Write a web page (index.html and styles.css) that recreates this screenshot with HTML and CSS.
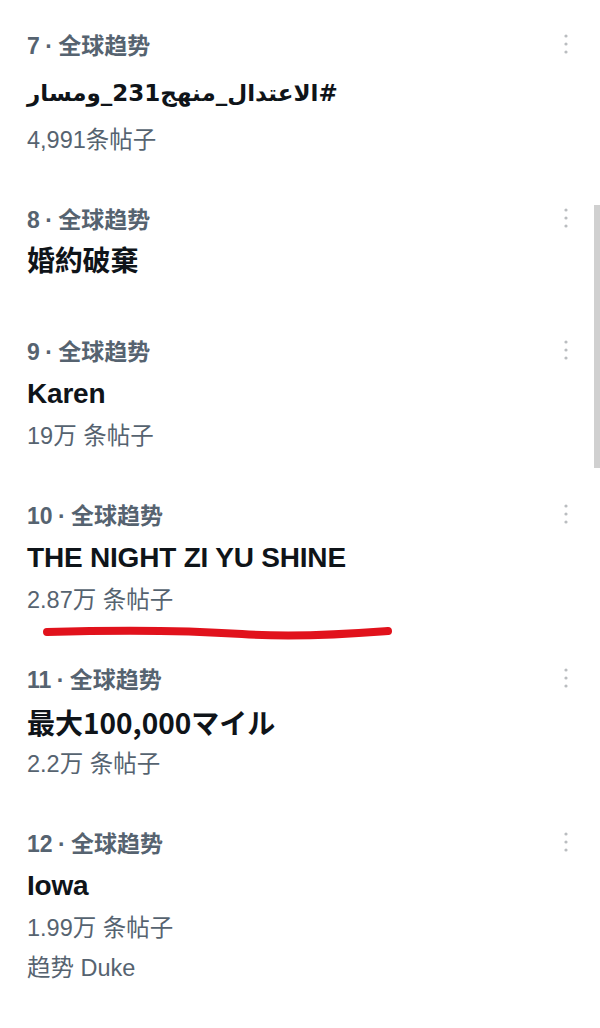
FILE: index.html
```html
<!DOCTYPE html>
<html lang="zh">
<head>
<meta charset="utf-8">
<title>趋势</title>
<link rel="stylesheet" href="styles.css">
</head>
<body>
<main class="trends">
  <section class="trend trend--tall">
    <div class="trend-body">
      <div class="meta">7 · 全球趋势</div>
      <div class="name name--ar"><span dir="rtl">#الاعتدال_منهج231_ومسار</span></div>
      <div class="count">4,991条帖子</div>
    </div>
    <div class="more"><svg viewBox="0 0 20 20" width="20" height="20"><circle cx="10" cy="2" r="1.6"/><circle cx="10" cy="10" r="1.6"/><circle cx="10" cy="18" r="1.6"/></svg></div>
  </section>

  <section class="trend trend--short">
    <div class="trend-body">
      <div class="meta">8 · 全球趋势</div>
      <div class="name">婚約破棄</div>
    </div>
    <div class="more"><svg viewBox="0 0 20 20" width="20" height="20"><circle cx="10" cy="2" r="1.6"/><circle cx="10" cy="10" r="1.6"/><circle cx="10" cy="18" r="1.6"/></svg></div>
  </section>

  <section class="trend">
    <div class="trend-body">
      <div class="meta">9 · 全球趋势</div>
      <div class="name">Karen</div>
      <div class="count">19万 条帖子</div>
    </div>
    <div class="more"><svg viewBox="0 0 20 20" width="20" height="20"><circle cx="10" cy="2" r="1.6"/><circle cx="10" cy="10" r="1.6"/><circle cx="10" cy="18" r="1.6"/></svg></div>
  </section>

  <section class="trend trend--marked">
    <div class="trend-body">
      <div class="meta">10 · 全球趋势</div>
      <div class="name">THE NIGHT ZI YU SHINE</div>
      <div class="count">2.87万 条帖子</div>
    </div>
    <div class="more"><svg viewBox="0 0 20 20" width="20" height="20"><circle cx="10" cy="2" r="1.6"/><circle cx="10" cy="10" r="1.6"/><circle cx="10" cy="18" r="1.6"/></svg></div>
    <svg class="underline" viewBox="0 0 352 16" width="352" height="16"><path d="M5 7 C 70 5, 140 5, 200 9 S 320 8, 346 6"/></svg>
  </section>

  <section class="trend">
    <div class="trend-body">
      <div class="meta">11 · 全球趋势</div>
      <div class="name name--cjk">最大100,000マイル</div>
      <div class="count">2.2万 条帖子</div>
    </div>
    <div class="more"><svg viewBox="0 0 20 20" width="20" height="20"><circle cx="10" cy="2" r="1.6"/><circle cx="10" cy="10" r="1.6"/><circle cx="10" cy="18" r="1.6"/></svg></div>
  </section>

  <section class="trend">
    <div class="trend-body">
      <div class="meta">12 · 全球趋势</div>
      <div class="name">Iowa</div>
      <div class="count">1.99万 条帖子</div>
      <div class="count count--sub">趋势 Duke</div>
    </div>
    <div class="more"><svg viewBox="0 0 20 20" width="20" height="20"><circle cx="10" cy="2" r="1.6"/><circle cx="10" cy="10" r="1.6"/><circle cx="10" cy="18" r="1.6"/></svg></div>
  </section>
</main>
<div class="scroll-thumb"></div>
</body>
</html>
```

FILE: styles.css
```css
html, body {
  margin: 0;
  padding: 0;
  background: #ffffff;
}

body {
  font-family: "Liberation Sans", "Noto Sans CJK SC", "DejaVu Sans", sans-serif;
  color: #0f1419;
  width: 600px;
  height: 1028px;
  overflow: hidden;
  position: relative;
}

.trends {
  padding-top: 6px;
  display: flex;
  flex-direction: column;
}

.trend {
  position: relative;
  display: flex;
  align-items: flex-start;
  padding: 19px 24px 19px 27px;
}

.trend--short {
  padding-bottom: 29px;
}

.trend-body {
  flex: 1;
  display: flex;
  flex-direction: column;
}

.meta {
  font-size: 23px;
  line-height: 42px;
  font-weight: 700;
  color: #566370;
  white-space: nowrap;
  word-spacing: -1px;
}

.name {
  font-size: 28px;
  line-height: 42px;
  font-weight: 700;
  color: #0f1419;
  letter-spacing: -0.2px;
  white-space: nowrap;
}

.name--cjk {
  font-family: "Noto Sans CJK JP", "Liberation Sans", sans-serif;
  letter-spacing: 0;
}

.name--ar {
  line-height: 52px;
  font-family: "DejaVu Sans", "Liberation Sans", sans-serif;
  font-size: 23px;
  letter-spacing: 0;
}

.count {
  font-size: 23.5px;
  line-height: 42px;
  color: #566370;
  white-space: nowrap;
}

.count--sub {
  line-height: 38px;
}

.more {
  width: 20px;
  height: 42px;
  display: flex;
  align-items: center;
  justify-content: center;
  margin-top: -2px;
}

.more svg {
  fill: #babdc0;
}

.underline {
  position: absolute;
  left: 42px;
  top: 149px;
  overflow: visible;
}

.underline path {
  fill: none;
  stroke: #e1121c;
  stroke-width: 8;
  stroke-linecap: round;
}

.scroll-thumb {
  position: absolute;
  left: 594px;
  top: 205px;
  width: 6px;
  height: 263px;
  background: #d0d0d0;
}
```
